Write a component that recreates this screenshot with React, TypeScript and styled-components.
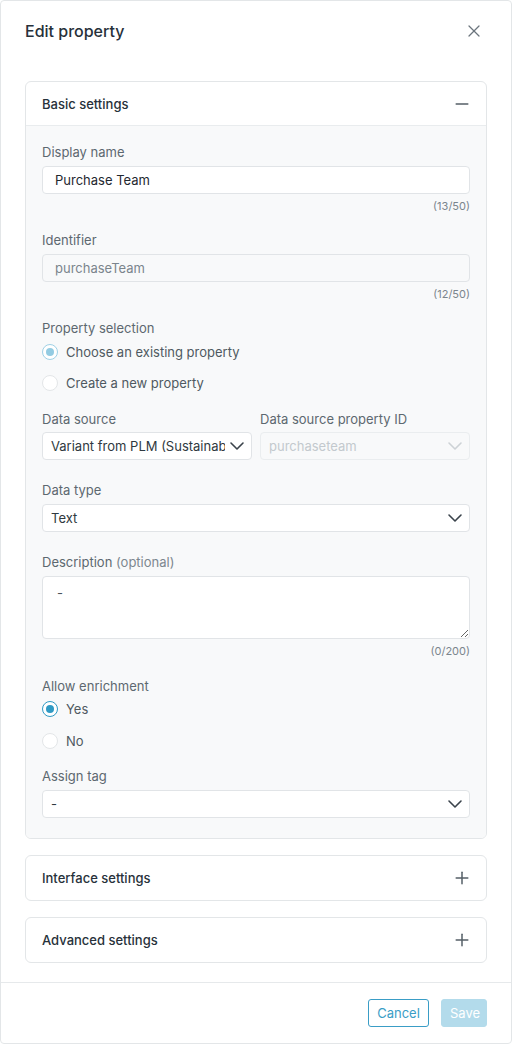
import React from "react";
import styled, { createGlobalStyle, css } from "styled-components";
import { ChevronDown, Minus, Plus, X } from "lucide-react";

const GlobalStyle = createGlobalStyle`
  * { box-sizing: border-box; }
  html, body { margin: 0; padding: 0; background: #ffffff; }
  body {
    font-family: Inter, "Noto Sans", "Liberation Sans", sans-serif;
    font-size: 13px;
    color: #27313a;
    -webkit-font-smoothing: antialiased;
  }
`;

const Dialog = styled.div`
  width: 512px;
  height: 1044px;
  border: 1px solid #e3e6e8;
  border-radius: 4px;
  background: #ffffff;
  display: flex;
  flex-direction: column;
`;

const Header = styled.header`
  display: flex;
  align-items: flex-start;
  justify-content: space-between;
  padding: 18px 27px 0 24px;
  height: 62px;
`;

const Title = styled.h1`
  margin: 0;
  font-size: 16px;
  line-height: 24px;
  font-weight: 500;
  color: #27313a;
`;

const CloseButton = styled.button`
  border: 0;
  background: none;
  padding: 0;
  margin-top: 2px;
  width: 20px;
  height: 20px;
  display: flex;
  align-items: center;
  justify-content: center;
  color: #6b757d;
  cursor: pointer;
`;

const Content = styled.main`
  flex: 1;
  padding: 18px 24px 0 24px;
  display: flex;
  flex-direction: column;
  gap: 16px;
`;

const Section = styled.section`
  border: 1px solid #e3e6e8;
  border-radius: 6px;
  background: #ffffff;
  overflow: hidden;
`;

const SectionHeader = styled.div<{ $open?: boolean }>`
  height: 44px;
  padding: 0 14px 0 16px;
  display: flex;
  align-items: center;
  justify-content: space-between;
  font-size: 13px;
  font-weight: 500;
  color: #27313a;
  ${(p) =>
    p.$open &&
    css`
      border-bottom: 1px solid #e9ecee;
    `}
  svg { color: #555f67; }
`;

const SectionBody = styled.div`
  background: #f8f9fa;
  padding: 16px 16px 20px 16px;
  display: flex;
  flex-direction: column;
`;

const Field = styled.div<{ $gap?: number }>`
  display: flex;
  flex-direction: column;
  margin-bottom: ${(p) => (p.$gap ?? 20)}px;
  min-width: 0;
`;

const Label = styled.label<{ $space?: number }>`
  font-size: 13px;
  line-height: 20px;
  color: #5d6870;
  margin-bottom: ${(p) => p.$space ?? 4}px;
`;

const Optional = styled.span`
  color: #7d878f;
`;

const TextInput = styled.input<{ $disabled?: boolean }>`
  height: 28px;
  width: 100%;
  border: 1px solid #e1e4e7;
  border-radius: 4px;
  background: #ffffff;
  padding: 0 12px;
  font-family: inherit;
  font-size: 13px;
  color: #1f2830;
  outline: none;
  ${(p) =>
    p.$disabled &&
    css`
      background: #f8f9fa;
      color: #7b858d;
    `}
`;

const TextArea = styled.textarea`
  height: 63px;
  width: 100%;
  border: 1px solid #e1e4e7;
  border-radius: 4px;
  background: #ffffff;
  padding: 6px 14px;
  font-family: inherit;
  font-size: 13px;
  line-height: 20px;
  color: #4a545c;
  resize: vertical;
  outline: none;
  display: block;
`;

const Counter = styled.div`
  align-self: flex-end;
  font-size: 11px;
  line-height: 16px;
  color: #7b858d;
  margin-top: 4px;
`;

const SelectBox = styled.div<{ $disabled?: boolean }>`
  height: 28px;
  border: 1px solid #e1e4e7;
  border-radius: 4px;
  background: #ffffff;
  display: flex;
  align-items: center;
  padding: 0 2px 0 8px;
  font-size: 13px;
  color: #2f3940;
  min-width: 0;
  svg { color: #3a434b; flex: none; }
  ${(p) =>
    p.$disabled &&
    css`
      background: #f8f9fa;
      border-color: #eaedef;
      color: #c3c9ce;
      svg { color: #cdd2d6; }
    `}
`;

const SelectValue = styled.span`
  flex: 1;
  min-width: 0;
  overflow: hidden;
  white-space: nowrap;
`;

const Row = styled.div`
  display: grid;
  grid-template-columns: 1fr 1fr;
  gap: 8px;
`;

const RadioGroup = styled.div<{ $gap: number; $top: number; $bottom: number }>`
  display: flex;
  flex-direction: column;
  gap: ${(p) => p.$gap}px;
  margin: ${(p) => p.$top}px 0 ${(p) => p.$bottom}px;
`;

const RadioRow = styled.label`
  height: 24px;
  display: flex;
  align-items: center;
  gap: 8px;
  font-size: 13px;
  color: #4f5961;
`;

const RadioDot = styled.span<{ $checked?: boolean; $muted?: boolean }>`
  width: 16px;
  height: 16px;
  border-radius: 50%;
  border: 1px solid #e3e6e8;
  background: #ffffff;
  flex: none;
  position: relative;
  ${(p) =>
    p.$checked &&
    css`
      border-color: ${p.$muted ? "#9fd1e6" : "#2f9ac4"};
      &::after {
        content: "";
        position: absolute;
        inset: 3px;
        border-radius: 50%;
        background: ${p.$muted ? "#93cbe2" : "#2f9ac4"};
      }
    `}
`;

const Footer = styled.footer`
  border-top: 1px solid #e6e9eb;
  height: 61px;
  padding: 16px 24px 16px 24px;
  display: flex;
  justify-content: flex-end;
  gap: 12px;
`;

const Button = styled.button<{ $primary?: boolean }>`
  height: 28px;
  padding: 0 8px;
  border-radius: 3px;
  font-family: inherit;
  font-size: 13px;
  cursor: pointer;
  ${(p) =>
    p.$primary
      ? css`
          width: 46px;
          border: 1px solid #b3dbeb;
          background: #b3dbeb;
          color: #ffffff;
        `
      : css`
          width: 61px;
          border: 1px solid #3a9dc6;
          background: #ffffff;
          color: #3a9dc6;
        `}
`;

type RadioOption = { label: string; checked?: boolean };

const Radios: React.FC<{
  options: RadioOption[];
  muted?: boolean;
  gap: number;
  top: number;
  bottom: number;
}> = ({ options, muted, gap, top, bottom }) => (
  <RadioGroup $gap={gap} $top={top} $bottom={bottom}>
    {options.map((o) => (
      <RadioRow key={o.label}>
        <RadioDot $checked={o.checked} $muted={muted} />
        {o.label}
      </RadioRow>
    ))}
  </RadioGroup>
);

const Select: React.FC<{ value: string; disabled?: boolean }> = ({ value, disabled }) => (
  <SelectBox $disabled={disabled}>
    <SelectValue>{value}</SelectValue>
    <ChevronDown size={24} strokeWidth={1.6} />
  </SelectBox>
);

export default function App() {
  return (
    <>
      <GlobalStyle />
      <Dialog>
        <Header>
          <Title>Edit property</Title>
          <CloseButton aria-label="Close">
            <X size={20} strokeWidth={1.5} />
          </CloseButton>
        </Header>

        <Content>
          <Section>
            <SectionHeader $open>
              Basic settings
              <Minus size={20} strokeWidth={1.8} />
            </SectionHeader>
            <SectionBody>
              <Field $gap={16}>
                <Label>Display name</Label>
                <TextInput readOnly defaultValue="Purchase Team" />
                <Counter>(13/50)</Counter>
              </Field>

              <Field $gap={16}>
                <Label>Identifier</Label>
                <TextInput readOnly $disabled defaultValue="purchaseTeam" />
                <Counter>(12/50)</Counter>
              </Field>

              <Label $space={0}>Property selection</Label>
              <Radios
                muted
                gap={7}
                top={2}
                bottom={14}
                options={[
                  { label: "Choose an existing property", checked: true },
                  { label: "Create a new property" },
                ]}
              />

              <Row>
                <Field>
                  <Label $space={3}>Data source</Label>
                  <Select value="Variant from PLM (Sustainability)" />
                </Field>
                <Field>
                  <Label $space={3}>Data source property ID</Label>
                  <Select value="purchaseteam" disabled />
                </Field>
              </Row>

              <Field>
                <Label>Data type</Label>
                <Select value="Text" />
              </Field>

              <Field $gap={17}>
                <Label>
                  Description <Optional>(optional)</Optional>
                </Label>
                <TextArea readOnly defaultValue="-" />
                <Counter>(0/200)</Counter>
              </Field>

              <Label $space={0}>Allow enrichment</Label>
              <Radios
                gap={8}
                top={1}
                bottom={13}
                options={[{ label: "Yes", checked: true }, { label: "No" }]}
              />

              <Field $gap={0}>
                <Label>Assign tag</Label>
                <Select value="-" />
              </Field>
            </SectionBody>
          </Section>

          <Section>
            <SectionHeader>
              Interface settings
              <Plus size={20} strokeWidth={1.8} />
            </SectionHeader>
          </Section>

          <Section>
            <SectionHeader>
              Advanced settings
              <Plus size={20} strokeWidth={1.8} />
            </SectionHeader>
          </Section>
        </Content>

        <Footer>
          <Button>Cancel</Button>
          <Button $primary>Save</Button>
        </Footer>
      </Dialog>
    </>
  );
}
